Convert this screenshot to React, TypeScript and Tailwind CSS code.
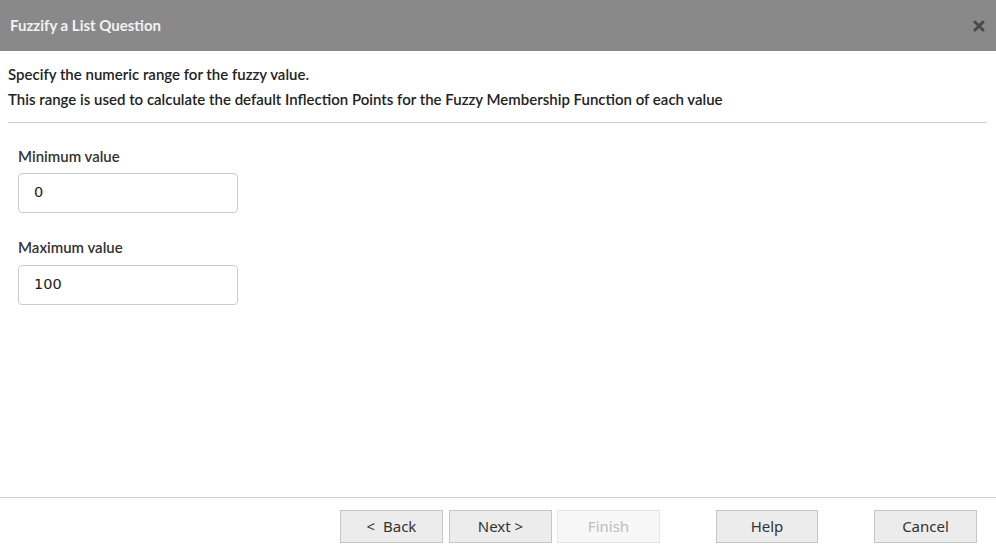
export default function App() {
  return (
    <div className="flex h-[558px] w-[996px] flex-col bg-white font-['Lato',sans-serif]">
      <div className="flex h-[51px] shrink-0 items-center justify-between bg-[#898989] pl-[10px] pr-[11px]">
        <span className="text-[15px] font-bold text-[#f2f2f2]">Fuzzify a List Question</span>
        <svg width="12" height="12" viewBox="0 0 12 12" className="text-[#4a4a4a]">
          <path d="M2 2 L10 10 M10 2 L2 10" stroke="currentColor" strokeWidth="3" strokeLinecap="round" />
        </svg>
      </div>

      <div className="px-[8px] pt-[11px]">
        <p className="text-[15px] font-semibold leading-[25px] text-[#222]">Specify the numeric range for the fuzzy value.</p>
        <p className="text-[15px] font-semibold leading-[25px] text-[#222]">
          This range is used to calculate the default Inflection Points for the Fuzzy Membership Function of each value
        </p>
        <div className="mr-[1px] mt-[10px] border-t border-[#cfcfcf]" />
      </div>

      <div className="flex flex-1 flex-col px-[18px] pt-[23px]">
        <label className="text-[15px] font-semibold leading-[20px] text-[#333]">Minimum value</label>
        <div className="mt-[7px] flex h-[40px] w-[220px] items-center rounded-[4px] border border-[#cccccc] px-[15px] font-['DejaVu_Sans',sans-serif] text-[14.5px] text-[#222]">
          0
        </div>
        <label className="mt-[24px] text-[15px] font-semibold leading-[20px] text-[#333]">Maximum value</label>
        <div className="mt-[8px] flex h-[40px] w-[220px] items-center rounded-[4px] border border-[#cccccc] px-[15px] font-['DejaVu_Sans',sans-serif] text-[14.5px] text-[#222]">
          100
        </div>
      </div>

      <div className="flex h-[61px] shrink-0 items-start border-t border-[#cfcfcf] pt-[12px] font-['Noto_Sans',sans-serif] text-[15px]">
        <div className="ml-[340px] flex">
          <button className="h-[33px] w-[103px] border border-[#c6c6c6] bg-[#ececec] text-[#333]">&lt;&nbsp; Back</button>
          <button className="ml-[6px] h-[33px] w-[103px] border border-[#c6c6c6] bg-[#ececec] text-[#333]">Next &gt;</button>
          <button className="ml-[5px] h-[33px] w-[103px] border border-[#e6e6e6] bg-[#f7f7f7] text-[#bdbdbd]">Finish</button>
        </div>
        <button className="ml-[56px] h-[33px] w-[102px] border border-[#c6c6c6] bg-[#ececec] text-[#333]">Help</button>
        <button className="ml-[56px] h-[33px] w-[103px] border border-[#c6c6c6] bg-[#ececec] text-[#333]">Cancel</button>
      </div>
    </div>
  );
}
